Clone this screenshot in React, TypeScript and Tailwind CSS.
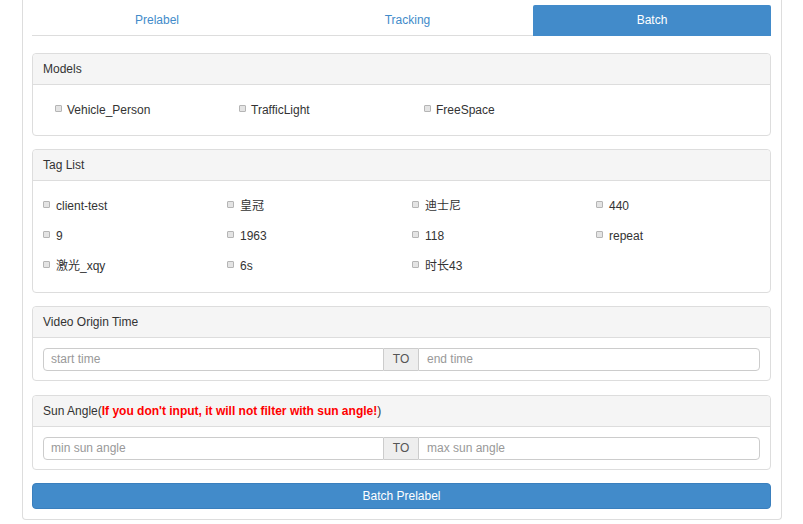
import React from "react";

const Box = ({ cls = "" }: { cls?: string }) => (
  <span
    className={
      "inline-block w-[7px] h-[7px] border border-[#b5b5b5] bg-[#e4e4e4] rounded-[1px] shrink-0 " + cls
    }
  />
);

const Check = ({ label, gap = "ml-[6px]" }: { label: string; gap?: string }) => (
  <div className="flex items-center h-[30px]">
    <Box cls="ml-[10px] -mt-[3px]" />
    <span className={gap}>{label}</span>
  </div>
);

const Panel = ({
  title,
  children,
  cls = "",
}: {
  title: React.ReactNode;
  children: React.ReactNode;
  cls?: string;
}) => (
  <div className={"border border-[#dddddd] rounded-[4px] " + cls}>
    <div className="h-[31px] bg-[#f5f5f5] border-b border-[#dddddd] rounded-t-[4px] flex items-center px-[10px] pb-[1px] text-[#333]">
      {title}
    </div>
    {children}
  </div>
);

const RangeInputs = ({ a, b }: { a: string; b: string }) => (
  <div className="flex h-[42px] pt-[10px] px-[10px]">
    <div className="flex w-full h-[23px]">
      <div className="flex-1 border border-[#cccccc] rounded-l-[4px] flex items-center pl-[7px] pb-[1px] text-[#999]">
        {a}
      </div>
      <div className="w-[34px] bg-[#eeeeee] border-y border-[#cccccc] flex items-center justify-center pb-[1px] text-[#555]">
        TO
      </div>
      <div className="flex-1 border border-[#cccccc] rounded-r-[4px] flex items-center pl-[8px] pb-[1px] text-[#999]">
        {b}
      </div>
    </div>
  </div>
);

export default function App() {
  const tags = [
    "client-test",
    "皇冠",
    "迪士尼",
    "440",
    "9",
    "1963",
    "118",
    "repeat",
    "激光_xqy",
    "6s",
    "时长43",
  ];
  return (
    <div
      className="w-[803px] h-[524px] bg-white overflow-hidden text-[12px] text-[#333]"
      style={{ fontFamily: '"Liberation Sans", Arial, "Noto Sans CJK SC", sans-serif' }}
    >
      <div className="ml-[22px] w-[760px] h-[520px] border-x border-b border-[#dddddd] rounded-b-[4px] pl-[9px] pr-[10px] pt-[5px]">
        <div className="grid grid-cols-[250px_251px_238px] h-[31px]">
          <div className="border-b border-[#dddddd] flex items-center justify-center text-[#428bca] pb-[1px]">
            Prelabel
          </div>
          <div className="border-b border-[#dddddd] flex items-center justify-center text-[#428bca] pb-[1px]">
            Tracking
          </div>
          <div className="bg-[#428bca] flex items-center justify-center text-white rounded-t-[2px] pb-[2px]">
            Batch
          </div>
        </div>

        <Panel title="Models" cls="mt-[17px]">
          <div className="h-[50px] grid grid-cols-[184px_185px_184px_184px] pl-[12px] items-center">
            <Check label="Vehicle_Person" gap="ml-[5px]" />
            <Check label="TrafficLight" gap="ml-[5px]" />
            <Check label="FreeSpace" gap="ml-[5px]" />
          </div>
        </Panel>

        <Panel title="Tag List" cls="mt-[13px]">
          <div className="h-[111px] grid grid-cols-[184px_185px_184px_184px] content-start pt-[10px]">
            {tags.map((t) => (
              <Check key={t} label={t} />
            ))}
          </div>
        </Panel>

        <Panel title="Video Origin Time" cls="mt-[13px]">
          <RangeInputs a="start time" b="end time" />
        </Panel>

        <Panel
          title={
            <span>
              Sun Angle(
              <span className="text-[#ff0000] font-bold">
                If you don't input, it will not filter with sun angle!
              </span>
              )
            </span>
          }
          cls="mt-[14px]"
        >
          <RangeInputs a="min sun angle" b="max sun angle" />
        </Panel>

        <button className="mt-[13px] w-full h-[26px] bg-[#428bca] border border-[#3a7fbd] rounded-[4px] text-white text-[12px] flex items-center justify-center">
          Batch Prelabel
        </button>
      </div>
    </div>
  );
}
